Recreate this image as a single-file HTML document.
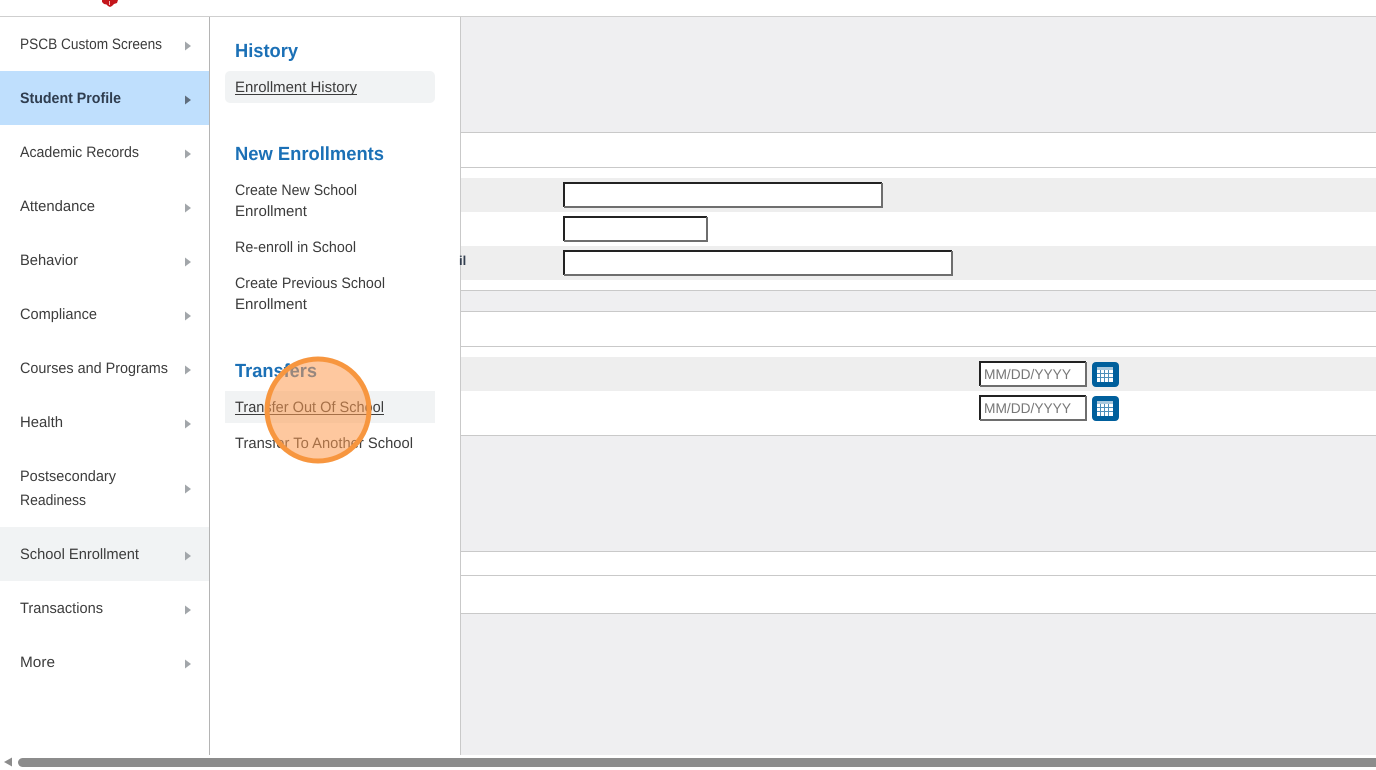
<!DOCTYPE html>
<html lang="en">
<head>
<meta charset="utf-8">
<title>Student Profile</title>
<style>
html,body{margin:0;padding:0;width:1376px;height:770px;overflow:hidden;background:#fff}
svg{display:block}
text{font-family:"Liberation Sans",Arial,sans-serif;text-rendering:geometricPrecision}
.m{font-size:15px;fill:#3c3c3c}
.b{font-weight:bold;fill:#2f3d4f}
.h{font-size:19px;font-weight:bold;fill:#1b70b6}
.d{font-size:14px;fill:#777}
</style>
</head>
<body>
<svg width="1376" height="770" viewBox="0 0 1376 770" xmlns="http://www.w3.org/2000/svg">
<rect width="1376" height="770" fill="#fff"/>
<!-- top bar -->
<path d="M102 0h16l-1 3-3 1-2 2-2 1-2-1-1.500-1.500-2.500-.5-2-2z" fill="#c4161c"/>
<rect x="109" y="1" width="1" height="4" fill="#f3b9bb"/>
<rect y="16" width="1376" height="1" fill="#cfcfcf"/>
<!-- content area -->
<rect x="461" y="17" width="915" height="115" fill="#efeff1"/>
<rect x="461" y="132" width="915" height="1" fill="#c9c9c9"/>
<rect x="461" y="167" width="915" height="1" fill="#c9c9c9"/>
<rect x="461" y="178" width="915" height="34" fill="#eeeeee"/>
<rect x="461" y="246" width="915" height="34" fill="#eeeeee"/>
<rect x="461" y="290" width="915" height="1" fill="#c9c9c9"/>
<rect x="461" y="291" width="915" height="20" fill="#efeff1"/>
<rect x="461" y="311" width="915" height="1" fill="#c9c9c9"/>
<rect x="461" y="346" width="915" height="1" fill="#c9c9c9"/>
<rect x="461" y="357" width="915" height="34" fill="#eeeeee"/>
<rect x="461" y="435" width="915" height="1" fill="#c9c9c9"/>
<rect x="461" y="436" width="915" height="115" fill="#efeff1"/>
<rect x="461" y="551" width="915" height="1" fill="#c9c9c9"/>
<rect x="461" y="575" width="915" height="1" fill="#c9c9c9"/>
<rect x="461" y="613" width="915" height="1" fill="#c9c9c9"/>
<rect x="461" y="614" width="915" height="141" fill="#efeff1"/>
<!-- inputs -->
<g fill="#fff">
<rect x="563" y="182" width="320" height="26"/>
<rect x="563" y="216" width="145" height="26"/>
<rect x="563" y="250" width="390" height="26"/>
<rect x="979" y="361" width="108" height="26"/>
<rect x="979" y="395" width="108" height="26"/>
</g>
<g fill="none" stroke-width="2">
<path d="M564 207V183H882" stroke="#222"/><path d="M564 207H882V183" stroke="#6e6e6e"/>
<path d="M564 241V217H707" stroke="#222"/><path d="M564 241H707V217" stroke="#6e6e6e"/>
<path d="M564 275V251H952" stroke="#222"/><path d="M564 275H952V251" stroke="#6e6e6e"/>
<path d="M980 386V362H1086" stroke="#222"/><path d="M980 386H1086V362" stroke="#6e6e6e"/>
<path d="M980 420V396H1086" stroke="#222"/><path d="M980 420H1086V396" stroke="#6e6e6e"/>
</g>
<text class="d" x="984" y="379" textLength="87" lengthAdjust="spacingAndGlyphs">MM/DD/YYYY</text>
<text class="d" x="984" y="413" textLength="87" lengthAdjust="spacingAndGlyphs">MM/DD/YYYY</text>
<!-- calendar buttons -->
<g>
<rect x="1092" y="362" width="27" height="25" rx="4" fill="#005f9c"/>
<rect x="1097" y="367" width="16" height="15" fill="#fff"/>
<rect x="1097" y="367" width="16" height="3" fill="#a9c8dd"/>
<path d="M1097 373.500h16M1097 377.500h16M1100.500 370v12M1104.500 370v12M1108.500 370v12" stroke="#4e8fba" stroke-width="1" fill="none"/>
</g>
<g transform="translate(0,34)">
<rect x="1092" y="362" width="27" height="25" rx="4" fill="#005f9c"/>
<rect x="1097" y="367" width="16" height="15" fill="#fff"/>
<rect x="1097" y="367" width="16" height="3" fill="#a9c8dd"/>
<path d="M1097 373.500h16M1097 377.500h16M1100.500 370v12M1104.500 370v12M1108.500 370v12" stroke="#4e8fba" stroke-width="1" fill="none"/>
</g>
<!-- sidebar -->
<rect x="0" y="17" width="209" height="738" fill="#fff"/>
<rect x="0" y="71" width="209" height="54" fill="#bfdffd"/>
<rect x="0" y="527" width="209" height="54" fill="#f1f3f4"/>
<rect x="209" y="17" width="1" height="738" fill="#b4b4b4"/>
<text class="m" x="20" y="49" textLength="142" lengthAdjust="spacingAndGlyphs">PSCB Custom Screens</text>
<text class="m b" x="20" y="103" textLength="101" lengthAdjust="spacingAndGlyphs">Student Profile</text>
<text class="m" x="20" y="157" textLength="119" lengthAdjust="spacingAndGlyphs">Academic Records</text>
<text class="m" x="20" y="211" textLength="75" lengthAdjust="spacingAndGlyphs">Attendance</text>
<text class="m" x="20" y="265" textLength="58" lengthAdjust="spacingAndGlyphs">Behavior</text>
<text class="m" x="20" y="319" textLength="77" lengthAdjust="spacingAndGlyphs">Compliance</text>
<text class="m" x="20" y="373" textLength="148" lengthAdjust="spacingAndGlyphs">Courses and Programs</text>
<text class="m" x="20" y="427" textLength="43" lengthAdjust="spacingAndGlyphs">Health</text>
<text class="m" x="20" y="481" textLength="96" lengthAdjust="spacingAndGlyphs">Postsecondary</text>
<text class="m" x="20" y="505" textLength="66" lengthAdjust="spacingAndGlyphs">Readiness</text>
<text class="m" x="20" y="559" textLength="119" lengthAdjust="spacingAndGlyphs">School Enrollment</text>
<text class="m" x="20" y="613" textLength="83" lengthAdjust="spacingAndGlyphs">Transactions</text>
<text class="m" x="20" y="667" textLength="35" lengthAdjust="spacingAndGlyphs">More</text>
<!-- arrows -->
<g fill="#a2a6aa">
<path d="M185 41.500l6 4.500-6 4.500z"/>
<path d="M185 149.500l6 4.500-6 4.500z"/>
<path d="M185 203.500l6 4.500-6 4.500z"/>
<path d="M185 257.500l6 4.500-6 4.500z"/>
<path d="M185 311.500l6 4.500-6 4.500z"/>
<path d="M185 365.500l6 4.500-6 4.500z"/>
<path d="M185 419.500l6 4.500-6 4.500z"/>
<path d="M185 484.500l6 4.500-6 4.500z"/>
<path d="M185 551.500l6 4.500-6 4.500z"/>
<path d="M185 605.500l6 4.500-6 4.500z"/>
<path d="M185 659.500l6 4.500-6 4.500z"/>
</g>
<path d="M185 95.500l6 4.500-6 4.500z" fill="#5f6e7e"/>
<!-- flyout panel -->
<rect x="210" y="17" width="250" height="738" fill="#fff"/>
<rect x="460" y="17" width="1" height="738" fill="#c9c9c9"/>
<text x="459" y="265" font-size="13" font-weight="bold" fill="#333f50">il</text>
<rect x="225" y="71" width="210" height="32" rx="5" fill="#f1f3f4"/>
<rect x="225" y="391" width="210" height="32" fill="#f1f3f4"/>
<text class="h" x="235" y="57" textLength="63" lengthAdjust="spacingAndGlyphs">History</text>
<text class="m" x="235" y="92" textLength="122" lengthAdjust="spacingAndGlyphs">Enrollment History</text>
<rect x="235" y="94" width="122" height="1" fill="#3c3c3c"/>
<text class="h" x="235" y="160" textLength="149" lengthAdjust="spacingAndGlyphs">New Enrollments</text>
<text class="m" x="235" y="195" textLength="122" lengthAdjust="spacingAndGlyphs">Create New School</text>
<text class="m" x="235" y="216" textLength="72" lengthAdjust="spacingAndGlyphs">Enrollment</text>
<text class="m" x="235" y="252" textLength="121" lengthAdjust="spacingAndGlyphs">Re-enroll in School</text>
<text class="m" x="235" y="288" textLength="150" lengthAdjust="spacingAndGlyphs">Create Previous School</text>
<text class="m" x="235" y="309" textLength="72" lengthAdjust="spacingAndGlyphs">Enrollment</text>
<text class="h" x="235" y="377" textLength="82" lengthAdjust="spacingAndGlyphs">Transfers</text>
<text class="m" x="235" y="412" textLength="149" lengthAdjust="spacingAndGlyphs">Transfer Out Of School</text>
<rect x="235" y="414" width="149" height="1" fill="#3c3c3c"/>
<text class="m" x="235" y="448" textLength="178" lengthAdjust="spacingAndGlyphs">Transfer To Another School</text>
<!-- highlight circle -->
<circle cx="318" cy="410" r="51" fill="#fd9a50" fill-opacity="0.55" stroke="#f7963f" stroke-width="5"/>
<!-- scrollbar -->
<path d="M12 757.500v9l-8-4.500z" fill="#8c8c8c"/>
<rect x="18" y="758" width="1370" height="9" rx="4.500" fill="#8c8c8c"/>
</svg>
</body>
</html>
